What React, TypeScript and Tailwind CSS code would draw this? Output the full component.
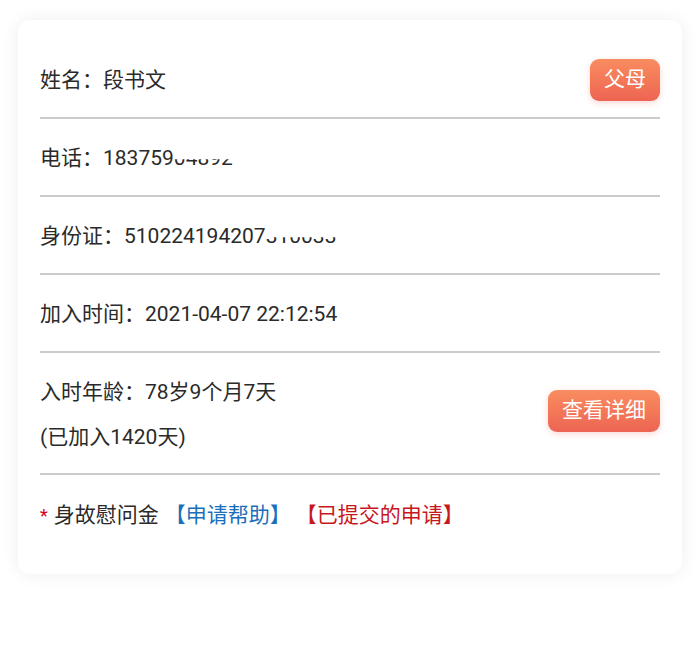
import React from "react"

const font = { fontFamily: "Roboto, 'Noto Sans CJK SC', sans-serif" }

function Row({ children, last }: { children: React.ReactNode; last?: boolean }) {
  return (
    <div className={`flex items-center justify-between h-[78px] ${last ? "" : "border-b-2 border-[#cbcbcb]"}`}>
      {children}
    </div>
  )
}

function OrangeButton({ label, width }: { label: string; width: string }) {
  return (
    <button
      className={`${width} h-[42px] rounded-[9px] bg-linear-to-b from-[#f98c60] to-[#ed6452] text-white text-[21px] shadow-[0_2px_6px_rgba(237,100,82,0.25)] flex items-center justify-center`}
    >
      {label}
    </button>
  )
}

export default function App() {
  return (
    <div className="min-h-[662px] bg-white pt-5 px-[18px]" style={font}>
      <div className="bg-white rounded-[12px] shadow-[0_0_18px_rgba(0,0,0,0.07)] px-[22px] pt-[21px] pb-[21px] text-[21px] text-[#2a2a2a]">
        <Row>
          <span className="pt-[3px]">姓名：段书文</span>
          <div className="mt-[2px]">
            <OrangeButton label="父母" width="w-[70px]" />
          </div>
        </Row>

        <Row>
          <span className="pt-[3px]">
            电话：183759
            <span className="inline-block [clip-path:inset(52%_0_0_0)]">04892</span>
          </span>
        </Row>

        <Row>
          <span className="pt-[3px]">
            身份证：510224194207
            <span className="inline-block [clip-path:inset(52%_0_0_0)]">310033</span>
          </span>
        </Row>

        <Row>
          <span className="pt-[3px]">加入时间：2021-04-07 22:12:54</span>
        </Row>

        {/* 入时年龄 - two lines */}
        <div className="flex items-center justify-between h-[122px] border-b-2 border-[#cbcbcb]">
          <div className="flex flex-col leading-[45px] pt-[3px]">
            <span>入时年龄：78岁9个月7天</span>
            <span>(已加入1420天)</span>
          </div>
          <div className="-mt-[4px]">
            <OrangeButton label="查看详细" width="w-[112px]" />
          </div>
        </div>

        <Row last>
          <div className="flex items-center pt-[3px]">
            <span className="text-[#d0021b] text-[18px] mr-[6px]">*</span>
            <span>身故慰问金</span>
            <span className="ml-[6px] text-[#1a6fbd]">【申请帮助】</span>
            <span className="ml-[5px] text-[#c8161d]">【已提交的申请】</span>
          </div>
        </Row>
      </div>
    </div>
  )
}
